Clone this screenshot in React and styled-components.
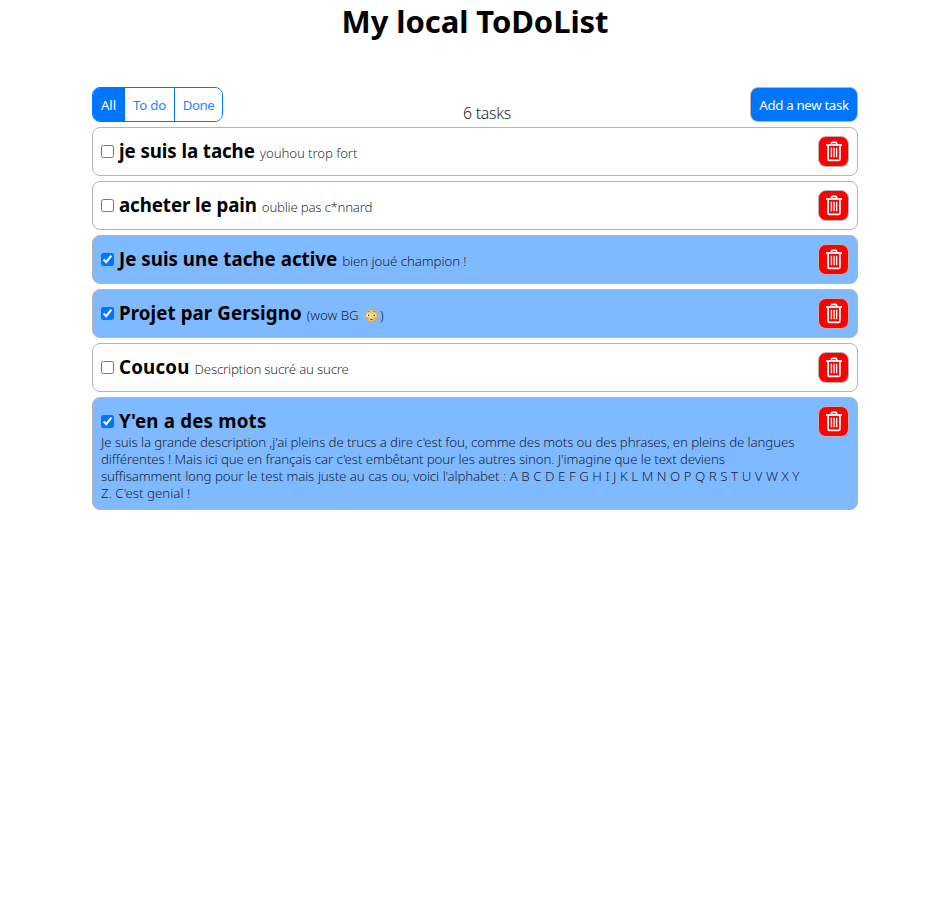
import React, { useState } from "react";
import styled, { createGlobalStyle } from "styled-components";

const GlobalStyle = createGlobalStyle`
  * { box-sizing: border-box; }
  body {
    margin: 0;
    background: #fff;
    color: #000;
    font-family: "Noto Sans", "Open Sans", sans-serif;
  }
`;

const Page = styled.main`
  display: flex;
  flex-direction: column;
  align-items: center;
  padding-right: 1px;
`;

const Title = styled.h1`
  margin: 0;
  height: 87px;
  font-size: 31px;
  line-height: 43px;
  font-weight: 700;
  letter-spacing: -0.08px;
`;

const Content = styled.div`
  width: 766px;
  display: flex;
  flex-direction: column;
  gap: 5px;
`;

const Toolbar = styled.header`
  height: 35px;
  display: grid;
  grid-template-columns: 131px 1fr 108px;
  align-items: stretch;
`;

const FilterGroup = styled.div`
  display: grid;
  grid-template-columns: 32px 50px 47px;
  border: 1px solid #0075ff;
  border-radius: 8px;
  overflow: hidden;
`;

const FilterButton = styled.button`
  border: 0;
  border-right: ${(p) => (p.$last ? "0 solid" : "1px solid")} #0075ff;
  padding: 0;
  font-family: inherit;
  font-size: 13.3px;
  letter-spacing: ${(p) => p.$spacing}px;
  background: ${(p) => (p.$active ? "#0075ff" : "#fff")};
  color: ${(p) => (p.$active ? "#fff" : "#2b7fff")};
`;

const Count = styled.div`
  align-self: end;
  justify-self: center;
  margin: 0 0 -1px 1px;
  font-size: 16px;
  font-weight: 300;
  line-height: 20px;
  letter-spacing: -0.3px;
  color: rgba(0, 0, 0, 0.88);
`;

const AddButton = styled.button`
  border: 1px solid #b5b5b5;
  border-radius: 8px;
  padding: 0;
  background: #0075ff;
  color: #fff;
  font-family: inherit;
  font-size: 13.3px;
  letter-spacing: -0.34px;
  white-space: nowrap;
`;

const Row = styled.article`
  display: flex;
  align-items: flex-start;
  justify-content: space-between;
  min-height: 49px;
  padding: 8px 8px 7px;
  border: 1px solid #b5b5b5;
  border-radius: 8px;
  background: ${(p) => (p.$done ? "#7fb9ff" : "#fff")};
`;

const Body = styled.div`
  flex: 1;
  min-width: 0;
`;

const Heading = styled.div`
  display: flex;
  align-items: baseline;
  height: 28px;
  padding-top: 1px;
  line-height: 28px;
  white-space: nowrap;
`;

const Check = styled.input`
  align-self: center;
  flex: none;
  width: 13px;
  height: 13px;
  margin: 2px 5px 0 0;
  accent-color: #0075ff;
`;

const TaskName = styled.h3`
  margin: 0 5px 0 0;
  font-size: 18.72px;
  font-weight: 700;
  letter-spacing: ${(p) => p.$spacing}px;
`;

const Note = styled.span`
  font-size: 13.3px;
  font-weight: 300;
  letter-spacing: ${(p) => p.$spacing}px;
  word-spacing: ${(p) => p.$wordSpacing || 0}px;
  color: rgba(0, 0, 0, 0.85);
`;

const Emoji = styled.span`
  color: #000;
  font-size: 12px;
  filter: hue-rotate(-12deg) saturate(0.75);
  margin: 0 1px 0 2px;
`;

const Description = styled.p`
  margin: 0;
`;

const DescriptionLine = styled(Note)`
  display: block;
  height: 17px;
  line-height: 17px;
  white-space: nowrap;
`;

const DeleteButton = styled.button`
  flex: none;
  display: flex;
  align-items: center;
  justify-content: center;
  width: 31px;
  height: 31px;
  padding: 0;
  border: 1px solid #b5b5b5;
  border-radius: 8px;
  background: #f00;
`;

const TrashIcon = () => (
  <svg width="21" height="25" viewBox="0 0 21 25" fill="none" stroke="#fff">
    <path d="M3 6h16" strokeWidth="1.8" />
    <path d="M8.4 5.5V4.2c0-.5.3-.8.8-.8h3.6c.5 0 .8.3.8.8v1.3" strokeWidth="1.6" />
    <path d="M5.1 6v13.9c0 .9.5 1.4 1.4 1.4h9c.9 0 1.4-.5 1.4-1.4V6" strokeWidth="1.8" />
    <path d="M8.4 8.8v9.4M11 8.8v9.4M13.6 8.8v9.4" strokeWidth="1.4" />
  </svg>
);

const filters = [
  { label: "All", spacing: -0.1 },
  { label: "To do", spacing: -0.25 },
  { label: "Done", spacing: -0.5 },
];

const initialTasks = [
  { name: "je suis la tache", spacing: -0.07, note: "youhou trop fort", noteSpacing: -0.13 },
  { name: "acheter le pain", spacing: -0.08, note: "oublie pas c*nnard", noteSpacing: -0.27 },
  { name: "Je suis une tache active", spacing: 0.03, note: "bien joué champion !", noteSpacing: -0.1, done: true },
  { name: "Projet par Gersigno", spacing: 0.09, note: "(wow BG ", emoji: "😳", noteEnd: ")", noteSpacing: -0.05, done: true },
  { name: "Coucou", spacing: 0.2, note: "Description sucré au sucre", noteSpacing: -0.23 },
  {
    name: "Y'en a des mots",
    spacing: 0.2,
    done: true,
    lines: [
      ["Je suis la grande description ,j'ai pleins de trucs a dire c'est fou, comme des mots ou des phrases, en pleins de langues", -0.14],
      ["différentes ! Mais ici que en français car c'est embêtant pour les autres sinon. J'imagine que le text deviens", -0.12],
      ["suffisamment long pour le test mais juste au cas ou, voici l'alphabet : A B C D E F G H I J K L M N O P Q R S T U V W X Y", -0.16, 0.38],
      ["Z. C'est genial !", 0],
    ],
  },
];

function Task({ task, onToggle }) {
  return (
    <Row $done={task.done}>
      <Body>
        <Heading>
          <Check type="checkbox" checked={!!task.done} onChange={onToggle} />
          <TaskName $spacing={task.spacing}>{task.name}</TaskName>
          {task.note && (
            <Note $spacing={task.noteSpacing}>
              {task.note}
              {task.emoji && <Emoji>{task.emoji}</Emoji>}
              {task.noteEnd}
            </Note>
          )}
        </Heading>
        {task.lines && (
          <Description>
            {task.lines.map(([text, spacing, wordSpacing]) => (
              <DescriptionLine key={text} $spacing={spacing} $wordSpacing={wordSpacing}>
                {text}
              </DescriptionLine>
            ))}
          </Description>
        )}
      </Body>
      <DeleteButton aria-label="Delete">
        <TrashIcon />
      </DeleteButton>
    </Row>
  );
}

export default function App() {
  const [tasks, setTasks] = useState(initialTasks);
  const [filter, setFilter] = useState("All");
  const visible = tasks.filter((t) => filter === "All" || (filter === "Done") === !!t.done);
  const toggle = (name) =>
    setTasks(tasks.map((t) => (t.name === name ? { ...t, done: !t.done } : t)));

  return (
    <>
      <GlobalStyle />
      <Page>
        <Title>My local ToDoList</Title>
        <Content>
          <Toolbar>
            <FilterGroup>
              {filters.map((f, i) => (
                <FilterButton
                  key={f.label}
                  $active={filter === f.label}
                  $last={i === filters.length - 1}
                  $spacing={f.spacing}
                  onClick={() => setFilter(f.label)}
                >
                  {f.label}
                </FilterButton>
              ))}
            </FilterGroup>
            <Count>{visible.length} tasks</Count>
            <AddButton>Add a new task</AddButton>
          </Toolbar>
          {visible.map((t) => (
            <Task key={t.name} task={t} onToggle={() => toggle(t.name)} />
          ))}
        </Content>
      </Page>
    </>
  );
}
